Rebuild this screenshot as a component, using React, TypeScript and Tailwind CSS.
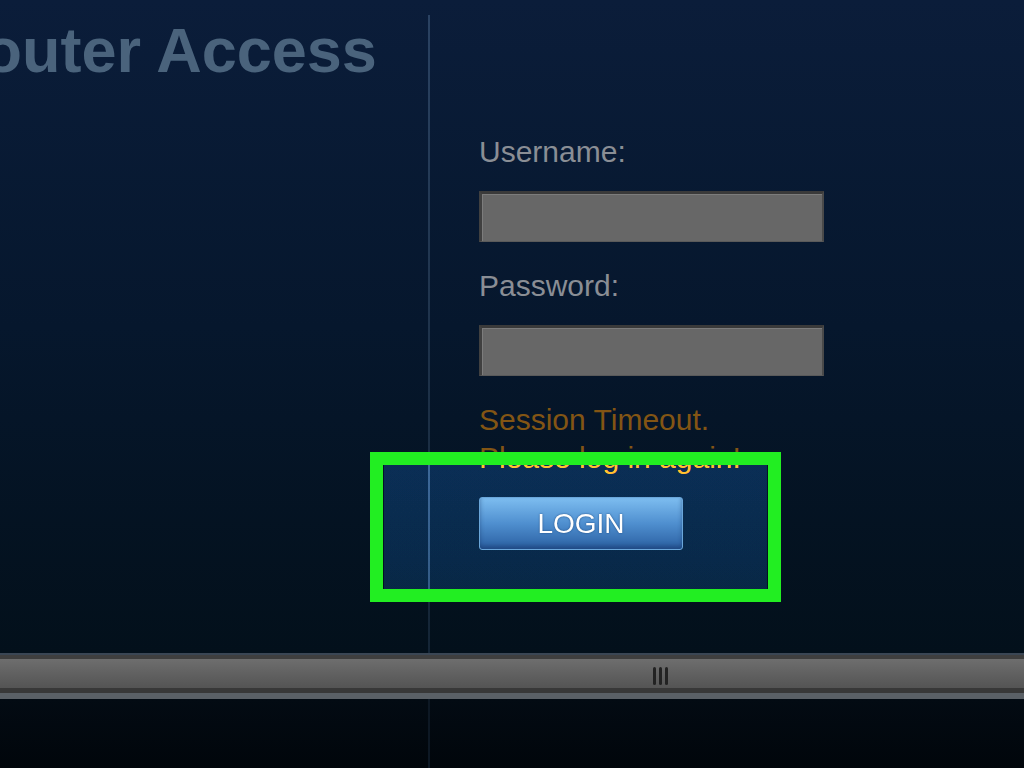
import React from 'react';

const Field: React.FC = () => (
  <div className="h-[51px] w-[345px] bg-[#676767] border-t-[3px] border-l-[3px] border-b border-r-2 border-t-[#3a3a3a] border-l-[#404040] border-b-[#5a5a5a] border-r-[#4a4a4a] shadow-[inset_1px_1px_0_#7c7c7c]" />
);

export default function App() {
  return (
    <div className="relative w-full h-[768px] overflow-hidden flex flex-col font-['Liberation_Sans',Arial,sans-serif] bg-[#01070d]">
      {/* Main panel */}
      <div className="h-[653px] flex bg-gradient-to-b from-[#0b1d3a] via-[#06172d] to-[#03101b]">
        {/* Left column, title cut off */}
        <div className="w-[428px] overflow-hidden pt-[19px]">
          <h1 className="ml-[-62px] whitespace-nowrap text-[63px] leading-none font-bold text-[#4a637c]">
            Router Access
          </h1>
        </div>

        <div className="w-[2px] mt-[15px] bg-gradient-to-b from-[#2a4262] to-[#142536]" />

        {/* Login form */}
        <div className="flex-1 pl-[49px] pt-[137px] flex flex-col text-[30px]">
          <label className="leading-[30px] text-[#8a8e95]">Username:</label>
          <div className="mt-[24px]"><Field /></div>
          <label className="mt-[29px] leading-[30px] text-[#8a8e95]">Password:</label>
          <div className="mt-[24px]"><Field /></div>
          <p className="mt-[25px] leading-[38px] text-[#835514]">
            Session Timeout.
            <br />
            Please log in again!
          </p>
          <button className="relative z-20 mt-[20px] h-[53px] w-[204px] rounded-[3px] border border-[#6aa6da] bg-gradient-to-b from-[#7dbdf0] via-[#4f8fcf] to-[#2b60a2] text-[28px] leading-none text-white [text-shadow:0_0_2px_#1d4a80] shadow-[inset_0_-3px_4px_rgba(20,50,100,0.5)]">
            LOGIN
          </button>
        </div>
      </div>

      {/* Horizontal scrollbar */}
      <div className="h-[46px] flex flex-col">
        <div className="h-[2px] bg-[#3a4654]" />
        <div className="h-[4px] bg-[#3f3f3f]" />
        <div className="h-[29px] bg-gradient-to-b from-[#6e6e6e] to-[#545454] flex items-center pl-[653px]">
          <div className="flex gap-[3px] h-[18px] mt-[4px]">
            <div className="w-[3px] rounded-full bg-[#222]" />
            <div className="w-[3px] rounded-full bg-[#222]" />
            <div className="w-[3px] rounded-full bg-[#222]" />
          </div>
        </div>
        <div className="h-[5px] bg-[#383838]" />
        <div className="h-[6px] bg-[#5a6066]" />
      </div>

      {/* Below */}
      <div className="flex-1 flex bg-gradient-to-b from-[#030b13] to-[#01060b]">
        <div className="w-[428px]" />
        <div className="w-[2px] bg-[#0d1824]" />
      </div>

      {/* Highlight annotation */}
      <div className="absolute z-10 left-[384px] top-[465px] w-[383px] h-[125px] backdrop-brightness-[2.3]" />
      <div className="absolute z-30 left-[370px] top-[452px] w-[411px] h-[150px] border-[13px] border-[#22ee22]" />
    </div>
  );
}
